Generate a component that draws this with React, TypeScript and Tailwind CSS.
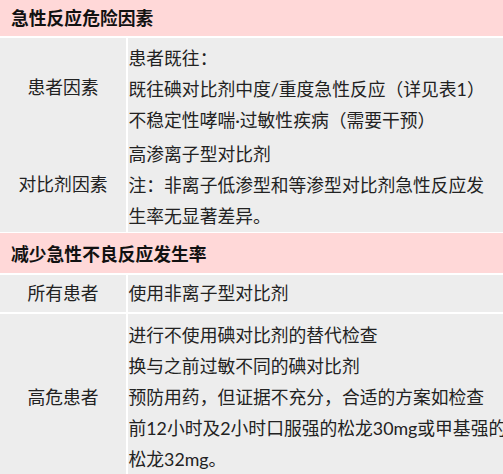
const SECTIONS = [
  {
    title: '急性反应危险因素',
    head: 'h-[36px]',
    rows: [
      { label: '患者因素', h: 'h-[96px] pt-[5px]', lines: ['患者既往：', '既往碘对比剂中度/重度急性反应（详见表1）', '不稳定性哮喘·过敏性疾病（需要干预）'] },
      { label: '对比剂因素', h: 'h-[95px] pt-[3px]', lines: ['高渗离子型对比剂', '注：非离子低渗型和等渗型对比剂急性反应发', '生率无显著差异。'] },
    ],
  },
  {
    title: '减少急性不良反应发生率',
    head: 'h-[40px] pt-[3px]',
    rows: [
      { label: '所有患者', h: 'h-[37px]', lines: ['使用非离子型对比剂'] },
      {
        label: '高危患者',
        h: 'h-[166px]',
        lines: ['进行不使用碘对比剂的替代检查', '换与之前过敏不同的碘对比剂', '预防用药，但证据不充分，合适的方案如检查', '前12小时及2小时口服强的松龙30mg或甲基强的', '松龙32mg。'],
      },
    ],
  },
];

export default function App() {
  return (
    <div className="w-[503px] h-[474px] overflow-hidden bg-white flex flex-col gap-[2px] text-[17.8px] text-[#222] [font-family:Lato,'Noto_Sans_CJK_SC',sans-serif]">
      {SECTIONS.map(s => (
        <div key={s.title} className="flex flex-col gap-[2px]">
          <div className={`bg-[#ffd8d8] pl-[11px] flex items-center font-bold text-[#111] ${s.head}`}>{s.title}</div>
          {s.rows.map(r => (
            <div key={r.label} className={`grid grid-cols-[126px_1fr] gap-x-[1.5px] shrink-0 bg-white ${r.h.split(' ')[0]}`}>
              <div className="bg-[#ededed] flex items-center justify-center">{r.label}</div>
              <div className={`bg-[#ededed] flex flex-col justify-center pl-[1px] leading-[31px] ${r.h.split(' ')[1] ?? ''}`}>
                {r.lines.map(l => <div key={l} className="whitespace-nowrap">{l}</div>)}
              </div>
            </div>
          ))}
        </div>
      ))}
    </div>
  );
}
